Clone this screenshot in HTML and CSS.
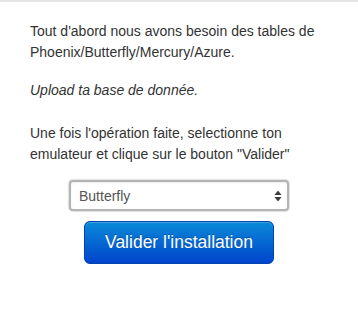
FILE: index.html
```html
<!DOCTYPE html>
<html lang="fr">

<head>
    <meta charset="UTF-8">
    <title>Installation</title>
    <link rel="stylesheet" href="styles.css">
</head>

<body>
    <div class="page">
        <p class="intro">Tout d'abord nous avons besoin des tables de Phoenix/Butterfly/Mercury/Azure.</p>
        <p class="upload"><em>Upload ta base de donnée.</em></p>
        <p class="hint">Une fois l'opération faite, selectionne ton emulateur et clique sur le bouton "Valider"</p>

        <form class="install">
            <!-- choix de l'emulateur -->
            <div class="select-wrap">
                <select class="emu">
                    <option>Phoenix</option>
                    <option selected>Butterfly</option>
                    <option>Mercury</option>
                    <option>Azure</option>
                </select>
                <svg class="select-arrows" width="8" height="12" viewBox="0 0 8 12">
                    <path d="M4 0.5 L7.5 5 L0.5 5 Z" fill="#3c3c3c"/>
                    <path d="M4 11.5 L7.5 7 L0.5 7 Z" fill="#3c3c3c"/>
                </svg>
            </div>
            <button type="button" class="btn-primary">Valider l'installation</button>
        </form>
    </div>
</body>

</html>
```

FILE: styles.css
```css
* {
    margin: 0;
    padding: 0;
    box-sizing: border-box;
}

body {
    font-family: "Liberation Sans", Arial, sans-serif;
    font-size: 14px;
    line-height: 21px;
    color: #333;
    background: #fff;
}

.page {
    border-top: 2px solid #e6e6e6;
    padding: 19px 30px 0;
}

.intro {
    margin-bottom: 17px;
}

.upload {
    margin-bottom: 22px;
}

/* formulaire centré */
.install {
    display: flex;
    flex-direction: column;
    align-items: center;
    gap: 10px;
    margin-top: 15px;
}

.select-wrap {
    position: relative;
    width: 220px;
}

.emu {
    display: block;
    width: 100%;
    height: 31px;
    padding: 0 24px 0 8px;
    border: 2px solid #b4b4b4;
    border-radius: 4px;
    box-shadow: 0 0 1px 1px rgba(0, 0, 0, 0.12), inset 0 1px 2px rgba(0, 0, 0, 0.08);
    background: #fff;
    font-family: "Liberation Sans", Arial, sans-serif;
    font-size: 14px;
    color: #555;
    -webkit-appearance: none;
    appearance: none;
    outline: none;
}

.select-arrows {
    position: absolute;
    right: 7px;
    top: 10px;
    pointer-events: none;
}

.btn-primary {
    padding: 11px 20px;
    border: 1px solid #0044b3;
    border-radius: 6px;
    background-color: #006dcc;
    background-image: linear-gradient(to bottom, #0a8ad8, #0044cc);
    color: #fff;
    font-family: "Liberation Sans", Arial, sans-serif;
    font-size: 17.5px;
    line-height: 19px;
    text-shadow: 0 -1px 0 rgba(0, 0, 0, 0.25);
    box-shadow: inset 0 1px 0 rgba(255, 255, 255, 0.2), 0 1px 2px rgba(0, 0, 0, 0.05);
    cursor: pointer;
}
```
